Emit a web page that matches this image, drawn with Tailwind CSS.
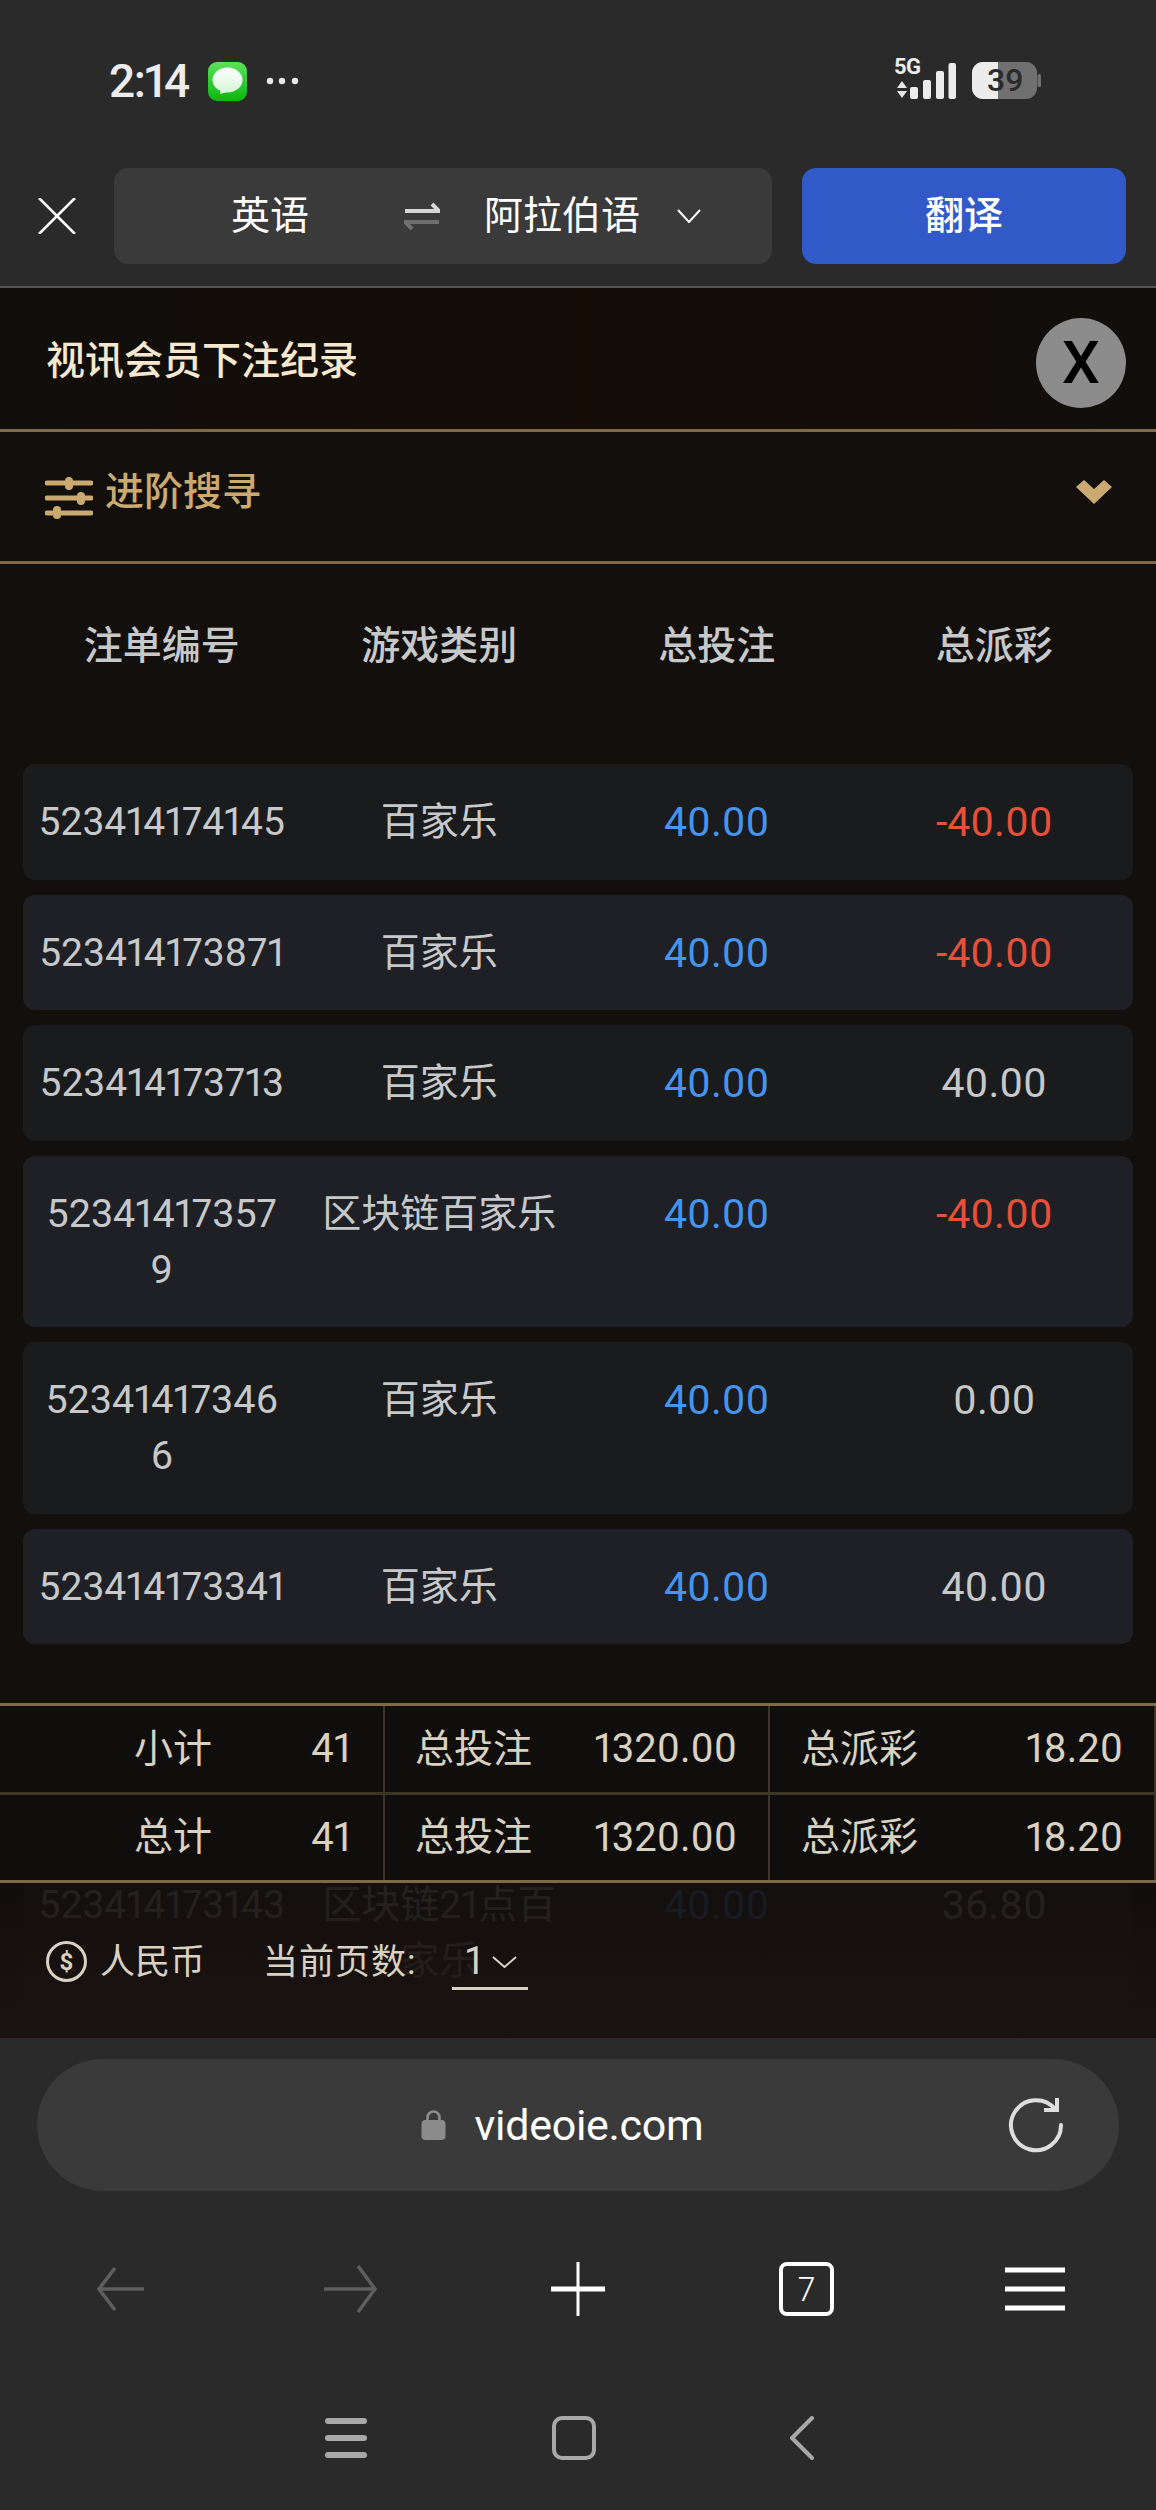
<!DOCTYPE html>
<html lang="zh-CN">
  <head>
    <meta charset="UTF-8" />
    <title>视讯会员下注纪录</title>
    <script src="https://cdn.jsdelivr.net/npm/@tailwindcss/browser@4"></script>
  </head>
  <body class="bg-[#2a2a2a]">
    <div class="w-[1156px] h-[2510px] overflow-hidden flex flex-col [font-family:Roboto,'Noto_Sans_CJK_SC',sans-serif] [font-variant-numeric:proportional-nums]">
      <!-- Status bar + translate bar -->
      <header class="h-[288px] shrink-0 bg-[#2a2a2a] border-b-2 border-[#555555]">
        <div class="h-[168px] flex justify-between pt-[59px] pl-[109px] pr-[115px]">
          <div class="flex items-start h-[44px]">
            <span class="text-[46px] leading-[44px] font-medium text-[#ececec] tracking-[-1.5px] w-[99px]">2:14</span>
            <svg width="39" height="39" viewBox="0 0 39 39" class="mt-[3px]">
              <defs>
                <linearGradient id="msg" x1="0" y1="0" x2="0" y2="1">
                  <stop offset="0" stop-color="#5be35b" />
                  <stop offset="1" stop-color="#0ab50f" />
                </linearGradient>
                <linearGradient id="bub" x1="0" y1="0" x2="0" y2="1">
                  <stop offset="0" stop-color="#ffffff" />
                  <stop offset="1" stop-color="#d7f5d7" />
                </linearGradient>
              </defs>
              <rect width="39" height="39" rx="9" fill="url(#msg)" />
              <ellipse cx="19.5" cy="18" rx="15" ry="12.5" fill="url(#bub)" />
              <path d="M13 27 L12 32 L19 30 Z" fill="#e4f7e4" />
            </svg>
            <svg width="34" height="8" viewBox="0 0 34 8" class="ml-[19px] mt-[18px]">
              <circle cx="4" cy="4" r="3.2" fill="#e6e6e6" />
              <circle cx="16" cy="4" r="3.2" fill="#e6e6e6" />
              <circle cx="29" cy="4" r="3.2" fill="#e6e6e6" />
            </svg>
          </div>
          <div class="flex items-start">
            <div class="w-[32px] flex flex-col -mt-[3px]">
              <span class="text-[22px] leading-[22px] font-bold text-[#ececec] tracking-[-0.5px]">5G</span>
              <svg width="12" height="17" viewBox="0 0 12 17" class="ml-[2px] mt-[3px]">
                <path d="M6 0 L11 7 H1 Z M1 10 H11 L6 17 Z" fill="#e6e6e6" />
              </svg>
            </div>
            <svg width="46" height="37" viewBox="0 0 46 37" class="mt-[4px] -ml-[16px]">
              <rect x="0" y="24" width="8" height="12" rx="2" fill="#ececec" />
              <rect x="13" y="17" width="8" height="19" rx="2" fill="#ececec" />
              <rect x="26" y="8" width="8" height="28" rx="2" fill="#ececec" />
              <rect x="38.5" y="0" width="7.5" height="36" rx="2" fill="#ececec" />
            </svg>
            <div class="relative ml-[16px] mt-[3px] w-[69px] h-[37px]">
              <svg width="69" height="37" viewBox="0 0 69 37">
                <rect x="0" y="0" width="65" height="37" rx="11" fill="#707070" />
                <path d="M11 0 H26 V37 H11 A11 11 0 0 1 0 26 V11 A11 11 0 0 1 11 0 Z" fill="#ececec" />
                <rect x="65.5" y="12" width="3.5" height="13" rx="1.5" fill="#707070" />
              </svg>
              <span class="absolute left-[15px] top-0 text-[32px] leading-[37px] font-medium text-[#2a2a2a]">39</span>
            </div>
          </div>
        </div>
        <div class="h-[96px] flex items-center">
          <div class="w-[114px] flex justify-center">
            <svg width="38" height="36" viewBox="0 0 38 36">
              <path d="M1 0 L37 36 M37 0 L1 36" stroke="#ffffff" stroke-width="2.6" fill="none" />
            </svg>
          </div>
          <div class="w-[658px] h-[96px] bg-[#3a3a3a] rounded-[14px] flex items-center text-white text-[39px]">
            <span class="ml-[117px] w-[173px]">英语</span>
            <svg width="36" height="28" viewBox="0 0 36 28">
              <path d="M1 9 H35 L28 2" stroke="#d6d6d6" stroke-width="4" fill="none" />
              <path d="M35 20 H1 L8 27" stroke="#6f6f6f" stroke-width="4" fill="none" />
            </svg>
            <span class="ml-[44px] w-[193px]">阿拉伯语</span>
            <svg width="24" height="14" viewBox="0 0 24 14">
              <path d="M1 1 L12 13 L23 1" stroke="#ffffff" stroke-width="2" fill="none" />
            </svg>
          </div>
          <div class="ml-[30px] w-[324px] h-[96px] bg-[#3159c8] rounded-[14px] flex items-center justify-center text-white text-[39px] font-medium">翻译</div>
        </div>
      </header>

      <!-- Page in the webview -->
      <main class="relative flex-1 overflow-hidden bg-[#120f0c] text-[#c6c8ca]">
        <div class="h-[141px] flex items-center justify-between pl-[46px] pr-[30px] bg-linear-to-r from-[#100e0c] via-[#160d07] to-[#100e0c] border-b-[3px] border-[#7d6b48] box-content">
          <h1 class="text-[39px] font-medium text-[#f6e7cf] mt-[5px]">视讯会员下注纪录</h1>
          <button class="w-[90px] h-[90px] mt-[9px] rounded-full bg-[#8c8c8c] text-black text-[60px] font-medium leading-[90px]">X</button>
        </div>
        <div class="h-[129px] flex items-center justify-between pl-[45px] pr-[44px] border-b-[3px] border-[#7d6b48] box-content">
          <div class="flex items-center text-[#cbaa72] text-[39px] font-medium">
            <svg width="48" height="42" viewBox="0 0 48 42" class="mr-[12px] mt-[2px]">
              <path d="M2 6 H46 M2 21 H46 M2 36 H46" stroke="#cbaa72" stroke-width="5" stroke-linecap="round" />
              <rect x="20" y="0" width="8" height="13" rx="4" fill="#cbaa72" />
              <rect x="32" y="15" width="8" height="13" rx="4" fill="#cbaa72" />
              <rect x="8" y="29" width="8" height="13" rx="4" fill="#cbaa72" />
            </svg>
            <span class="-mt-[9px]">进阶搜寻</span>
          </div>
          <svg width="36" height="24" viewBox="0 0 36 24" class="-mt-[10px]">
            <path d="M0 7 L8 0 L18 9 L28 0 L36 7 L18 24 Z" fill="#cbaa72" />
          </svg>
        </div>
        <div class="h-[200px] pb-[35px] mx-[23px] grid grid-cols-4 items-center text-center text-[39px] font-medium">
          <div>注单编号</div>
          <div>游戏类别</div>
          <div>总投注</div>
          <div>总派彩</div>
        </div>

        <!-- Bet rows -->
        <div class="mx-[23px] text-[39px] leading-[56px]">
          <div class="grid grid-cols-4 text-center pt-[30.25px] pb-[29.25px] mb-[15px] rounded-[12px] bg-[#1a1b1d]">
            <div class="text-[39px]">523414174145</div>
            <div>百家乐</div>
            <div class="text-[41px] text-[#4595ee]">40.00</div>
            <div class="text-[41px] text-[#e8503a]">-40.00</div>
          </div>
          <div class="grid grid-cols-4 text-center pt-[30.25px] pb-[29.25px] mb-[15px] rounded-[12px] bg-[#1e2026]">
            <div class="text-[39px]">523414173871</div>
            <div>百家乐</div>
            <div class="text-[41px] text-[#4595ee]">40.00</div>
            <div class="text-[41px] text-[#e8503a]">-40.00</div>
          </div>
          <div class="grid grid-cols-4 text-center pt-[30.25px] pb-[29.25px] mb-[15px] rounded-[12px] bg-[#1a1b1d]">
            <div class="text-[39px]">523414173713</div>
            <div>百家乐</div>
            <div class="text-[41px] text-[#4595ee]">40.00</div>
            <div class="text-[41px]">40.00</div>
          </div>
          <div class="grid grid-cols-4 text-center pt-[30.25px] pb-[29.25px] mb-[15px] rounded-[12px] bg-[#1e2026]">
            <div class="text-[39.5px]">52341417357<br />9</div>
            <div>区块链百家乐</div>
            <div class="text-[41px] text-[#4595ee]">40.00</div>
            <div class="text-[41px] text-[#e8503a]">-40.00</div>
          </div>
          <div class="grid grid-cols-4 text-center pt-[30.25px] pb-[29.25px] mb-[15px] rounded-[12px] bg-[#1a1b1d]">
            <div class="text-[39.5px]">52341417346<br />6</div>
            <div>百家乐</div>
            <div class="text-[41px] text-[#4595ee]">40.00</div>
            <div class="text-[41px]">0.00</div>
          </div>
          <div class="grid grid-cols-4 text-center pt-[30.25px] pb-[29.25px] mb-[203px] rounded-[12px] bg-[#1e2026]">
            <div class="text-[39px]">523414173341</div>
            <div>百家乐</div>
            <div class="text-[41px] text-[#4595ee]">40.00</div>
            <div class="text-[41px]">40.00</div>
          </div>
          <div class="grid grid-cols-4 text-center pt-[30.25px] pb-[29.25px] rounded-[12px] bg-[#1a1b1d]">
            <div class="text-[39px]">523414173143</div>
            <div class="px-[20px]">区块链21点百家乐</div>
            <div class="text-[41px] text-[#4595ee]">40.00</div>
            <div class="text-[41px]">36.80</div>
          </div>
        </div>

        <!-- Sticky totals, drawn over the list -->
        <div class="absolute left-0 right-0 bottom-0 h-[335px] text-[#d9d1c1] text-[39px]">
          <div class="bg-[#100e0c] border-y-[3px] border-[#7d6b48]">
            <div class="h-[86px] grid grid-cols-[385px_385px_386px] border-b-[3px] border-[#3d3626] box-content">
              <div class="flex items-center justify-between pl-[134px] pr-[32px] border-r-[2px] border-[#3d3626]"><span>小计</span><span class="text-[40px]">41</span></div>
              <div class="flex items-center justify-between pl-[30px] pr-[31px] border-r-[2px] border-[#3d3626]"><span>总投注</span><span class="text-[40px]">1320.00</span></div>
              <div class="flex items-center justify-between pl-[31px] pr-[31px] border-r-[2px] border-[#3d3626]"><span>总派彩</span><span class="text-[40px]">18.20</span></div>
            </div>
            <div class="h-[85px] grid grid-cols-[385px_385px_386px]">
              <div class="flex items-center justify-between pl-[134px] pr-[32px] border-r-[2px] border-[#3d3626]"><span>总计</span><span class="text-[40px]">41</span></div>
              <div class="flex items-center justify-between pl-[30px] pr-[31px] border-r-[2px] border-[#3d3626]"><span>总投注</span><span class="text-[40px]">1320.00</span></div>
              <div class="flex items-center justify-between pl-[31px] pr-[31px] border-r-[2px] border-[#3d3626]"><span>总派彩</span><span class="text-[40px]">18.20</span></div>
            </div>
          </div>
          <div class="h-[155px] flex items-start pl-[46px] pt-[58px] text-[35px] leading-[44px] bg-linear-to-b from-[#120e0c]/90 to-[#1a1210]/95">
            <div class="w-[41px] h-[41px] rounded-full border-[3px] border-[#d9d1c1] flex items-center justify-center text-[24px] font-bold">$</div>
            <span class="ml-[13px]">人民币</span>
            <span class="ml-[58px] tracking-[1px]">当前页数:</span>
            <div class="relative ml-[35px] -mt-[4px] w-[76px] h-[50px] border-b-[3px] border-[#d9d1c1] box-content">
              <span class="absolute left-[14px] top-[2px] text-[38px]">1</span>
              <svg width="25" height="12" viewBox="0 0 25 12" class="absolute left-[40px] top-[19px]">
                <path d="M1 1 L12.5 11 L24 1" stroke="#d9d1c1" stroke-width="2" fill="none" />
              </svg>
            </div>
          </div>
        </div>
      </main>

      <!-- Browser toolbar -->
      <footer class="h-[472px] shrink-0 bg-[#2a2a2a] pt-[21px]">
        <div class="relative mx-[37px] h-[132px] rounded-full bg-[#3a3a3a] flex items-center justify-center pr-[32px]">
          <svg width="25" height="30" viewBox="0 0 25 30" class="mr-[29px]">
            <path d="M6.5 12 V7.5 A6 6 0 0 1 18.5 7.5 V12" stroke="#8c8c8c" stroke-width="2.6" fill="none" />
            <rect x="0.5" y="10" width="24" height="20" rx="4" fill="#8c8c8c" />
          </svg>
          <span class="text-[43px] text-white tracking-[-0.3px]">videoie.com</span>
          <svg width="56" height="56" viewBox="0 0 56 56" class="absolute right-[55px] top-[38px]">
            <path d="M47 12 A25 25 0 1 0 53 28" stroke="#dedede" stroke-width="4" fill="none" stroke-linecap="round" />
            <path d="M36 13 H49 V1" stroke="#dedede" stroke-width="4" fill="none" />
          </svg>
        </div>
        <div class="mt-[70px] grid grid-cols-5 px-[7px] h-[56px]">
          <div class="flex items-center justify-center">
            <svg width="48" height="44" viewBox="0 0 48 44"><path d="M47 22 H3 M18 1 L2 22 L18 43" stroke="#5e5e5e" stroke-width="3.5" fill="none" /></svg>
          </div>
          <div class="flex items-center justify-center">
            <svg width="54" height="48" viewBox="0 0 54 48"><path d="M1 24 H51 M35 1 L52 24 L35 47" stroke="#5e5e5e" stroke-width="3.5" fill="none" /></svg>
          </div>
          <div class="flex items-center justify-center">
            <svg width="54" height="54" viewBox="0 0 54 54"><path d="M27 0 V54" stroke="#ffffff" stroke-width="3" /><path d="M0 27 H54" stroke="#ffffff" stroke-width="5" /></svg>
          </div>
          <div class="flex items-center justify-center">
            <div class="w-[55px] h-[54px] rounded-[8px] border-[4px] border-white flex items-center justify-center text-white text-[34px] font-light">7</div>
          </div>
          <div class="flex items-center justify-center">
            <svg width="60" height="44" viewBox="0 0 60 44"><path d="M0 3 H60 M0 22 H60 M0 41 H60" stroke="#ffffff" stroke-width="5" /></svg>
          </div>
        </div>
        <div class="mt-[98px] flex justify-center pr-[8px]">
          <div class="w-[228px] flex items-center justify-center h-[46px]">
            <svg width="42" height="40" viewBox="0 0 42 40"><path d="M3 3 H39 M3 20 H39 M3 37 H39" stroke="#a8a8a8" stroke-width="6" stroke-linecap="round" /></svg>
          </div>
          <div class="w-[228px] flex items-center justify-center h-[46px]">
            <div class="w-[44px] h-[44px] rounded-[10px] border-[4px] border-[#a8a8a8]"></div>
          </div>
          <div class="w-[228px] flex items-center justify-center h-[46px]">
            <svg width="26" height="44" viewBox="0 0 26 44"><path d="M23 2 L3 22 L23 42" stroke="#a8a8a8" stroke-width="4" fill="none" stroke-linecap="round" stroke-linejoin="round" /></svg>
          </div>
        </div>
      </footer>
    </div>
  </body>
</html>
